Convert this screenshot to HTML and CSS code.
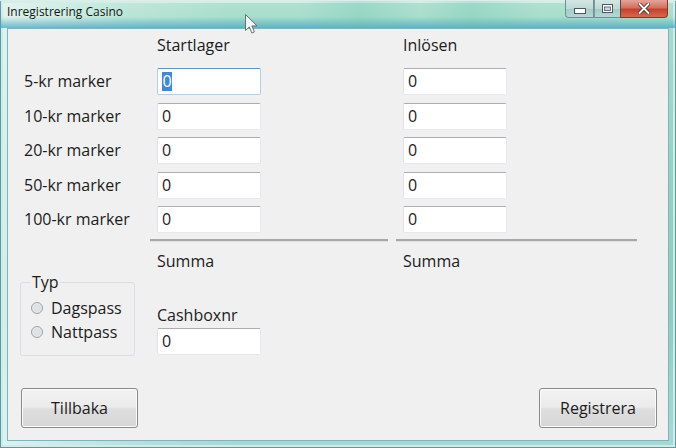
FILE: index.html
```html
<!DOCTYPE html>
<html lang="sv">
<head>
<meta charset="utf-8">
<title>Inregistrering Casino</title>
<link rel="stylesheet" href="styles.css">
</head>
<body>
<div class="window">
  <div class="titlebar">
    <span class="title">Inregistrering Casino</span>
    <div class="controls">
      <span class="cbtn min"><svg width="12" height="6" viewBox="0 0 12 6"><rect x="0.5" y="0.5" width="11" height="5" fill="#fff" stroke="#4a5a66"/></svg></span>
      <span class="cbtn max"><svg width="11" height="9" viewBox="0 0 11 9"><rect x="0.5" y="0.5" width="10" height="8" fill="#fff" stroke="#4a5a66"/><rect x="2.5" y="3" width="6" height="3.5" fill="#cfd8dc" stroke="#4a5a66" stroke-width="0.8"/></svg></span>
      <span class="cbtn close"><svg width="12" height="11" viewBox="0 0 12 11"><path d="M1.5 1 L10.5 10 M10.5 1 L1.5 10" stroke="#3a1a14" stroke-width="3.4" stroke-linecap="round"/><path d="M1.5 1 L10.5 10 M10.5 1 L1.5 10" stroke="#fff" stroke-width="2" stroke-linecap="round"/></svg></span>
    </div>
  </div>
  <div class="client">
    <div class="form">
      <div></div>
      <div class="hdr">Startlager</div>
      <div class="hdr">Inlösen</div>

      <div class="lbl">5-kr marker</div>
      <div class="tb focus"><span class="sel">0</span></div>
      <div class="tb">0</div>

      <div class="lbl">10-kr marker</div>
      <div class="tb">0</div>
      <div class="tb">0</div>

      <div class="lbl">20-kr marker</div>
      <div class="tb">0</div>
      <div class="tb">0</div>

      <div class="lbl">50-kr marker</div>
      <div class="tb">0</div>
      <div class="tb">0</div>

      <div class="lbl">100-kr marker</div>
      <div class="tb">0</div>
      <div class="tb">0</div>
    </div>

    <div class="rules">
      <span class="rule rule-a"></span>
      <span class="rule rule-b"></span>
    </div>

    <div class="lower">
      <fieldset class="typ">
        <legend>Typ</legend>
        <div class="radio"><span class="dot"></span>Dagspass</div>
        <div class="radio"><span class="dot"></span>Nattpass</div>
      </fieldset>
      <div class="col">
        <div class="txt">Summa</div>
        <div class="txt cash">Cashboxnr</div>
        <div class="tb cashbox">0</div>
      </div>
      <div class="col">
        <div class="txt">Summa</div>
      </div>
    </div>

    <div class="buttons">
      <button class="btn">Tillbaka</button>
      <button class="btn btn-r">Registrera</button>
    </div>
  </div>
  <svg class="cursor" width="14" height="22" viewBox="0 0 14 22"><path d="M0.5 0.5 L0.5 16.5 L4.3 12.9 L6.9 19 L9.4 17.9 L6.9 11.9 L12 11.9 Z" fill="#f4f7f7" stroke="#6a6f72" stroke-width="1" stroke-linejoin="round"/></svg>
</div>
</body>
</html>
```

FILE: styles.css
```css
html, body {
  margin: 0;
  padding: 0;
  background: #fff;
}

.window {
  position: relative;
  width: 676px;
  height: 448px;
  display: flex;
  flex-direction: column;
  box-sizing: border-box;
  background:
    linear-gradient(to right, rgba(255,255,255,0.65) 0, rgba(255,255,255,0.2) 130px, rgba(255,255,255,0) 230px),
    linear-gradient(to bottom, #a9dfcd 0, #8fd5bf 40%, #88d1bd 70%, #a4dbd4 100%);
  box-shadow: inset 0 0 0 1px #5a9aa6, inset 0 0 0 3px #d3ebe7;
  font-family: "Open Sans", "Noto Sans", sans-serif;
  color: #1c1c1c;
}

.titlebar {
  height: 28px;
  flex: 0 0 28px;
  display: flex;
  align-items: flex-start;
  box-sizing: border-box;
  background:
    linear-gradient(to right, rgba(255,255,255,0) 0, rgba(255,255,255,0) 300px, rgba(100,190,170,0.25) 360px, rgba(255,255,255,0) 420px, rgba(100,190,170,0.25) 470px, rgba(255,255,255,0) 540px),
    linear-gradient(to bottom, rgba(255,255,255,0.1) 0, rgba(255,255,255,0) 60%, rgba(70,165,195,0.75) 100%);
  box-shadow: inset 0 1px 0 #d9efe9;
}

.title {
  margin: 4px 0 0 7px;
  font-size: 12px;
  line-height: 16px;
  color: #151515;
}

.controls {
  margin-left: auto;
  margin-right: 8px;
  display: flex;
  height: 18px;
}

.cbtn {
  display: flex;
  align-items: center;
  justify-content: center;
  height: 18px;
  box-sizing: border-box;
  border: 1px solid #6f8f96;
  border-top: none;
}

.min {
  width: 28px;
  border-radius: 0 0 0 4px;
  border-right: none;
  background: linear-gradient(to bottom, #d3e6e4 0, #bfd9d6 50%, #a3cac6 51%, #b4d8d3 100%);
  padding-top: 4px;
}

.max {
  width: 27px;
  border-right: none;
  background: linear-gradient(to bottom, #d3e6e4 0, #bfd9d6 50%, #a3cac6 51%, #b4d8d3 100%);
  box-shadow: inset 1px 0 0 #7e9aa0;
}

.close {
  width: 48px;
  border-radius: 0 0 4px 0;
  border-color: #7c3a30;
  background: linear-gradient(to bottom, #e4a496 0, #d6705f 45%, #c5412c 55%, #d46a4f 100%);
}

.client {
  margin: 0 7px 7px;
  height: 413px;
  box-sizing: border-box;
  background: #f0f0f0;
  border: 1px solid #7fb3bf;
  display: flex;
  flex-direction: column;
  font-size: 16px;
}

.form {
  display: grid;
  grid-template-columns: 133px 246px 1fr;
  grid-template-rows: 33px 34.5px 34.5px 34.5px 34.5px 27px;
  padding: 6px 0 0 16px;
}

.hdr {
  line-height: 20px;
  height: 20px;
}

.lbl {
  height: 27px;
  line-height: 27px;
}

.tb {
  width: 104px;
  height: 27px;
  box-sizing: border-box;
  background: #fff;
  border: 1px solid #e3e9ef;
  border-top-color: #abadb3;
  border-left-color: #e2e3ea;
  border-radius: 2px;
  padding-left: 4px;
  line-height: 25px;
}

.tb.focus {
  border-color: #b5cfe7;
  border-top-color: #5e95c2;
}

.sel {
  display: inline-block;
  background: #3f8ad8;
  color: #fff;
  line-height: 19px;
  padding: 0 0.5px;
}

.rules {
  display: flex;
  padding-left: 142px;
  margin-top: 6px;
}

.rule {
  height: 2px;
  background: #a8a8a8;
  border-bottom: 1px solid #e0e0e0;
}

.rule-a {
  width: 238px;
}

.rule-b {
  width: 241px;
  margin-left: 8px;
}

.lower {
  display: grid;
  grid-template-columns: 149px 246px 1fr;
}

.txt {
  line-height: 20px;
  margin-top: 9px;
}

.txt.cash {
  margin-top: 34px;
}

.cashbox {
  margin-top: 3px;
}

.typ {
  margin: 30px 0 0 12px;
  width: 115px;
  box-sizing: border-box;
  border: 1px solid #d5dfe5;
  border-radius: 3px;
  padding: 0 0 11px 10px;
  min-width: 0;
  align-self: start;
}

.typ legend {
  padding: 0 1px;
  line-height: 20px;
  margin-left: 0;
}

.radio {
  display: flex;
  align-items: center;
  line-height: 24px;
  height: 24px;
}

.radio:first-of-type {
  margin-top: 4px;
}

.dot {
  width: 12px;
  height: 12px;
  box-sizing: border-box;
  border-radius: 50%;
  border: 1px solid #9aa0a6;
  background: radial-gradient(circle at 50% 50%, #e6e9ec 0, #dcdfe2 40%, #f7f7f7 100%);
  box-shadow: 0 0 0 1px #eef0f2;
  margin: 0 8px 0 0;
}

.buttons {
  margin-top: auto;
  display: flex;
  justify-content: space-between;
  padding: 0 11px 12px 13px;
}

.btn {
  width: 117px;
  height: 40px;
  box-sizing: border-box;
  border: 1px solid #8a8a8a;
  border-radius: 3px;
  background: linear-gradient(to bottom, #f2f2f2 0, #ebebeb 48%, #dedede 52%, #d6d6d6 100%);
  box-shadow: inset 0 0 0 1px #fafafa;
  font-family: "Open Sans", "Noto Sans", sans-serif;
  font-size: 16px;
  color: #1c1c1c;
  padding: 0;
}

.btn-r {
  width: 118px;
}

.cursor {
  position: absolute;
  left: 245px;
  top: 14px;
}
```
